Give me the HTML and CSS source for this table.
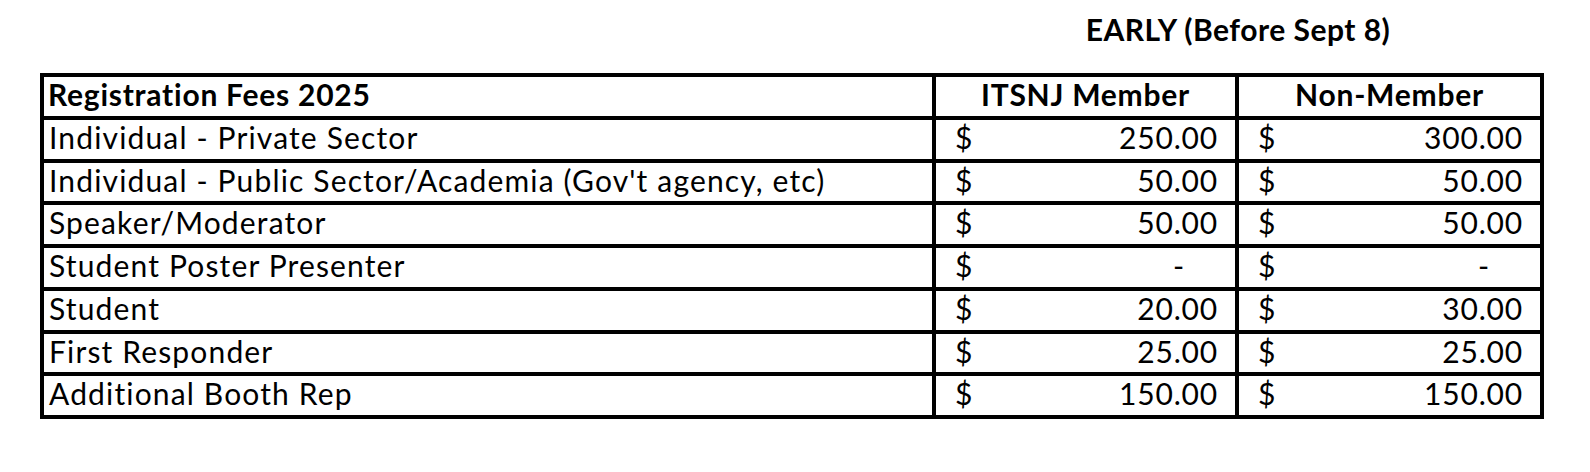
FILE: index.html
```html
<!DOCTYPE html>
<html lang="en">
<head>
<meta charset="utf-8">
<title>Registration Fees 2025</title>
<link rel="stylesheet" href="styles.css">
</head>
<body>
<div class="page">
  <div class="title-row">
    <div class="title-spacer"></div>
    <div class="title">EARLY (Before Sept 8)</div>
  </div>
  <div class="fees">
    <div class="cell label head">Registration Fees 2025</div>
    <div class="cell center head">ITSNJ Member</div>
    <div class="cell center head">Non-Member</div>

    <div class="cell label">Individual - Private Sector</div>
    <div class="cell amt"><span>$</span><span>250.00</span></div>
    <div class="cell amt"><span>$</span><span>300.00</span></div>

    <div class="cell label">Individual - Public Sector/Academia (Gov't agency, etc)</div>
    <div class="cell amt"><span>$</span><span>50.00</span></div>
    <div class="cell amt"><span>$</span><span>50.00</span></div>

    <div class="cell label">Speaker/Moderator</div>
    <div class="cell amt"><span>$</span><span>50.00</span></div>
    <div class="cell amt"><span>$</span><span>50.00</span></div>

    <div class="cell label">Student Poster Presenter</div>
    <div class="cell amt"><span>$</span><span class="dash">-</span></div>
    <div class="cell amt"><span>$</span><span class="dash">-</span></div>

    <div class="cell label">Student</div>
    <div class="cell amt"><span>$</span><span>20.00</span></div>
    <div class="cell amt"><span>$</span><span>30.00</span></div>

    <div class="cell label">First Responder</div>
    <div class="cell amt"><span>$</span><span>25.00</span></div>
    <div class="cell amt"><span>$</span><span>25.00</span></div>

    <div class="cell label">Additional Booth Rep</div>
    <div class="cell amt"><span>$</span><span>150.00</span></div>
    <div class="cell amt"><span>$</span><span>150.00</span></div>
  </div>
</div>
</body>
</html>
```
FILE: styles.css
```css
html, body {
  margin: 0;
  padding: 0;
  background: #ffffff;
}

body {
  font-family: Lato, "Liberation Sans", sans-serif;
  color: #000000;
}

.page {
  padding: 12px 0 0 40px;
  width: 1504px;
}

.title-row {
  display: flex;
  height: 61px;
}

.title-spacer {
  width: 892px;
  flex: none;
}

.title {
  width: 612px;
  text-align: center;
  font-weight: 700;
  font-size: 30px;
  line-height: 34px;
  letter-spacing: 0.5px;
}

.fees {
  display: grid;
  grid-template-columns: 888px 299px 301px;
  grid-template-rows: repeat(8, 38.75px);
  gap: 4px;
  padding: 4px;
  background: #000000;
  width: 1496px;
}

.cell {
  background: #ffffff;
  font-size: 30px;
  line-height: 35px;
  letter-spacing: 1.15px;
  overflow: hidden;
  white-space: nowrap;
}

.head {
  font-weight: 700;
  letter-spacing: 0.75px;
}

.label {
  padding-left: 5px;
}

.label.head {
  padding-left: 4px;
}

.center {
  text-align: center;
}

.amt {
  display: flex;
  justify-content: space-between;
  padding: 0 17px 0 19px;
  letter-spacing: 0.8px;
}

.dash {
  margin-right: 33px;
}
```
